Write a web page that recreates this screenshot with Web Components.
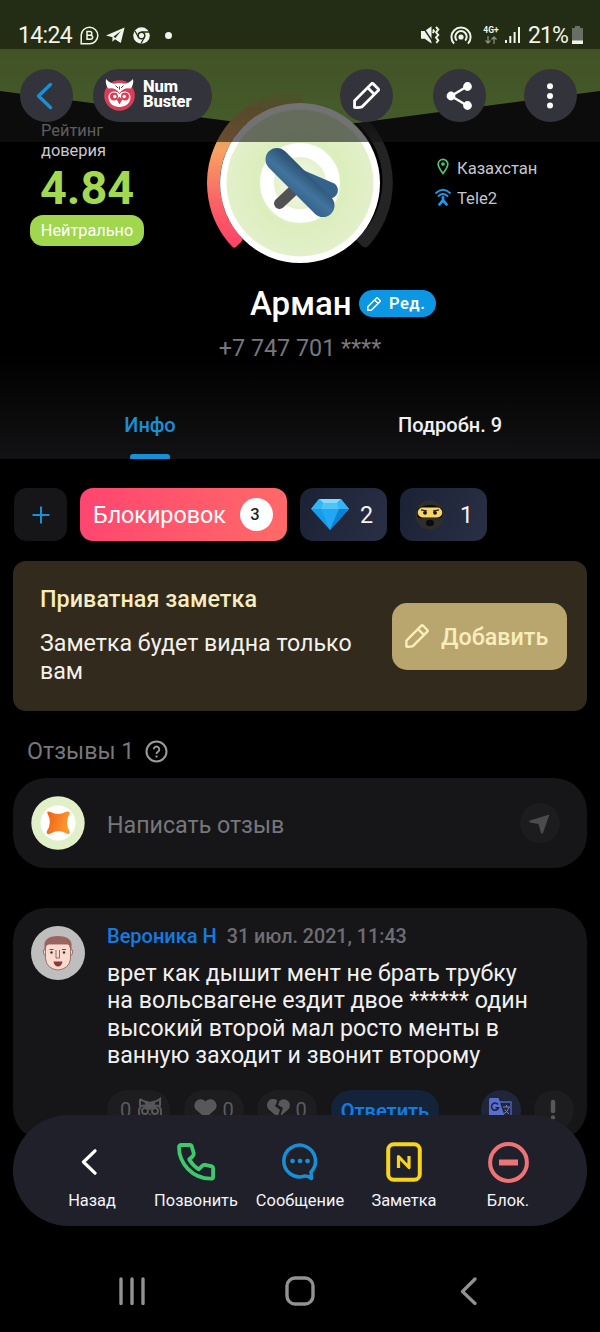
<!DOCTYPE html>
<html lang="ru">
<head>
<meta charset="utf-8">
<title>NumBuster</title>
<style>
html,body{margin:0;padding:0;background:#000}
body{width:600px;height:1332px;overflow:hidden;font-family:Roboto,"Noto Sans",sans-serif;color:#f4f4f4}
</style>
</head>
<body>
<phone-screen></phone-screen>
<script>
const define = (name, css, html) => {
  const t = document.createElement('template');
  t.innerHTML = `<style>*{box-sizing:border-box}svg{display:block;flex:none}:host{display:block;box-sizing:border-box}${css}</style>${html}`;
  customElements.define(name, class extends HTMLElement {
    constructor() { super(); this.attachShadow({mode:'open'}).append(t.content.cloneNode(true)); }
  });
};

const pencil = (size, sw) => `<svg width="${size}" height="${size}" viewBox="0 0 26 26" fill="none" stroke="currentColor" stroke-width="${sw}" stroke-linejoin="round"><path d="M1.5 24.5V18L17.7 1.8a1.3 1.3 0 0 1 1.8 0l4.7 4.7a1.3 1.3 0 0 1 0 1.8L8.5 24Q5 25 1.5 24.5ZM14.2 5.5l6.5 6.5"/></svg>`;

define('status-bar', `
:host{height:49px;background:rgba(0,0,0,.45);color:#f1f4ea}
.row{display:flex;align-items:center;height:49px;padding:21px 17px 0 18px;font-size:23px}
.time{width:55px;letter-spacing:-.65px}
.dot{width:7px;height:7px;border-radius:50%;background:currentColor;margin-left:15px}
.net{font-size:8.5px;font-weight:700;line-height:9px;width:18px;text-align:center;margin-left:10px}
.pct{letter-spacing:-.9px;margin-left:8px}
`, `<div class="row">
<span class="time">14:24</span>
<svg style="margin-left:7px" width="19" height="19" viewBox="0 0 19 19" fill="none" stroke="currentColor" stroke-width="1.5"><path d="M1.2 17.8V9.3a8.3 8.3 0 1 1 8.3 8.5Z"/><path d="M7 5.6h3a1.8 1.8 0 0 1 0 3.6H7Zm0 3.6h3.6a2 2 0 0 1 0 4H7Z"/></svg>
<svg style="margin-left:7px" width="19" height="17" viewBox="0 0 19 17" fill="currentColor"><path d="M18.6.5 14.8 16 9 12.2l-2.6 2.5.1-4.4L0 8.4Z"/><path d="m7.4 9.7 7.5-5.8-5.5 7.2Z" fill="#252e18"/></svg>
<svg style="margin-left:8px" width="17" height="17" viewBox="0 0 17 17"><circle cx="8.5" cy="8.5" r="8.3" fill="currentColor"/><circle cx="8.5" cy="8.5" r="3.3" fill="none" stroke="#252e18" stroke-width="1.500"/><path d="M8.5 5H16M5.5 10.3 2 4M11.4 10.3 8 16.5" stroke="#252e18" stroke-width="1.3"/></svg>
<i class="dot"></i>
<span style="flex:1"></span>
<svg width="19" height="18" viewBox="0 0 19 18" fill="currentColor"><path d="M0 5h3.7L10.5.3V17.5L3.7 12.8H0Z"/><path d="m1.5.6 11.5 17" stroke="#252e18" stroke-width="1.600"/><path d="m15 1 2.3 2.6L15 6.3 17.3 9 15 11.6l2.3 2.7-2 2.6M12 3.5l1 1.6-1.3 2" fill="none" stroke="currentColor" stroke-width="1.9"/></svg>
<svg style="margin-left:10px" width="22" height="19" viewBox="0 0 22 19" fill="none" stroke="currentColor" stroke-width="2"><path d="M4 17.6a9.6 9.6 0 1 1 14 0M6.8 14.6a5.7 5.7 0 1 1 8.4 0"/><circle cx="11" cy="11" r="1.6" fill="currentColor"/></svg>
<span class="net">4G+<svg width="12" height="8" viewBox="0 0 12 8" style="margin:1px auto 0" fill="none" stroke="#87907a" stroke-width="1.3"><path d="M3 0v7M.5 4.5 3 7l2.5-2.5M9 8V1M6.500 3.500 9 1l2.500 2.500"/></svg></span>
<svg style="margin-left:5px" width="15" height="16" viewBox="0 0 15 16" fill="currentColor"><path d="M0 13h2v3H0ZM4.300 9h2v7h-2ZM8.600 5h2v11h-2ZM13 0h2v16h-2Z"/></svg>
<span class="pct">21%</span>
<svg style="margin-left:4px" width="11" height="18" viewBox="0 0 11 18"><path d="M3 0h5v2h3v16H0V2h3Z" fill="#697063"/><path d="M0 14.500h11V18H0Z" fill="#f1f4ea"/></svg>
</div>`);

define('round-button', `:host{width:53px;height:53px;border-radius:50%;background:#33333b;color:#fff;display:grid;place-items:center}`, `<slot></slot>`);

define('brand-pill', `
:host{width:119px;height:53px;border-radius:27px;background:#33333b;color:#fff}
.r{display:flex;align-items:center;height:53px;padding:0 0 1px 11px;gap:8px}
b{display:block;font-size:16.500px;line-height:14.800px;font-weight:800;letter-spacing:-.1px}
`, `<div class="r"><svg width="31" height="32" viewBox="0 0 31 32">
<circle cx="15.500" cy="16.500" r="15.300" fill="#d83e55"/>
<path d="M2 0q4 4.500 9 4.800Q15.500 3 20 4.800 25 4.500 29 0q1 6-2.500 9.500Q20 8 15.500 14 11 8 4.500 9.500 1 6 2 0Z" fill="#fff"/>
<path d="M11.500 6.500 14 9m5.500-2.500L17 9m-1.500-1.500v3" stroke="#7a3340" stroke-width="1"/>
<path d="M15.500 15c-4-4.500-11-2.500-11 3 0 6.500 5 10 11 10s11-3.500 11-10c0-5.500-7-7.500-11-3Z" fill="#fff"/>
<circle cx="10" cy="17.500" r="4" fill="#d83e55"/><circle cx="21" cy="17.500" r="4" fill="#d83e55"/><circle cx="10.800" cy="17.500" r="1.700" fill="#fff"/><circle cx="20.200" cy="17.500" r="1.700" fill="#fff"/>
<path d="m15.500 17.500 2.800 3-2.800 5-2.800-5Z" fill="#d83e55"/></svg><div><b>Num</b><b>Buster</b></div></div>`);

define('top-bar', `
:host{position:absolute;inset:0 0 auto 0;height:142px;background:rgba(20,20,20,.6)}
nav{display:flex;align-items:center;padding:20px 23px 0 20px}
`, `<status-bar></status-bar><nav>
<round-button><svg width="18" height="28" viewBox="0 0 18 28" style="margin-right:6px" fill="none" stroke="#1591da" stroke-width="3.400" stroke-linecap="round" stroke-linejoin="round"><path d="M15.500 2.500 3.500 14l12 11.500"/></svg></round-button>
<brand-pill style="margin-left:20px"></brand-pill>
<round-button style="margin-left:128px">${pencil(27,2.7)}</round-button>
<round-button style="margin-left:40px"><svg width="27" height="28" viewBox="0 0 27 28" fill="#fff" stroke="#fff" stroke-width="2.400"><path d="M5 14 21 4.500M5 14l16 9.500" fill="none"/><circle cx="5" cy="14" r="3.200"/><circle cx="21.500" cy="4.500" r="3.200"/><circle cx="21.500" cy="23.500" r="3.200"/></svg></round-button>
<round-button style="margin-left:38px"><svg width="8" height="28" viewBox="0 0 8 28" fill="#fff" style="margin-right:1px"><circle cx="4" cy="4.300" r="3"/><circle cx="4" cy="14" r="3"/><circle cx="4" cy="23.500" r="3"/></svg></round-button>
</nav>`);

define('trust-rating', `
:host{padding:121px 0 0 30px}
p{margin:0 0 0 11px;font-size:16.400px;line-height:19.500px;color:#c9c9cf}
strong{display:block;margin:2px 0 0 10px;font-size:46.800px;line-height:52px;font-weight:700;color:#a2d951}
span{display:flex;align-items:center;justify-content:center;width:114px;height:31px;border-radius:13px;margin-top:1px;background:#a1d64f;color:#fff;font-size:16.300px}
`, `<p>Рейтинг<br>доверия</p><strong>4.84</strong><span>Нейтрально</span>`);

define('score-avatar', `:host{width:200px;height:200px;margin:83px 0 0 0}`, `
<svg width="200" height="200" viewBox="200 83 200 200">
<defs><linearGradient id="g" x1="0" x2="0" y1="90" y2="250" gradientUnits="userSpaceOnUse"><stop offset="0" stop-color="#8fc04a"/><stop offset=".12" stop-color="#b99a4c"/><stop offset=".38" stop-color="#f7a263"/><stop offset=".7" stop-color="#fb6266"/><stop offset="1" stop-color="#ff4066"/></linearGradient>
<linearGradient id="k" x1="0" x2="0" y1="90" y2="142" gradientUnits="userSpaceOnUse"><stop offset="0" stop-color="#fff" stop-opacity="0"/><stop offset="1" stop-color="#fff" stop-opacity=".14"/></linearGradient>
<radialGradient id="a" cx="300" cy="183" r="74" gradientUnits="userSpaceOnUse"><stop offset="0" stop-color="#f6faee"/><stop offset=".36" stop-color="#e4f1cc"/><stop offset=".6" stop-color="#dceebd"/><stop offset="1" stop-color="#e3f0cb"/></radialGradient>
<linearGradient id="b" x1="306" y1="172" x2="291" y2="190" gradientUnits="userSpaceOnUse"><stop offset="0" stop-color="#2f5476"/><stop offset=".6" stop-color="#41749d"/><stop offset="1" stop-color="#3a678f"/></linearGradient></defs>
<path d="M300 92.500A90.500 90.500 0 0 0 234.200 245.100L239.900 239.600A82.500 82.500 0 0 1 300 100.500Z" fill="url(#g)" stroke="url(#g)" stroke-width="5" stroke-linejoin="round"/>
<path d="M302.500 90A93 93 0 0 1 367.700 246.500Q365 248.500 362 246L356 240A79 79 0 0 0 302.500 102Z" fill="url(#k)"/>
<circle cx="300" cy="183" r="80" fill="#fff"/><circle cx="300" cy="183" r="73.500" fill="url(#a)"/>
<circle cx="300" cy="183" r="33" fill="none" stroke="#fff" stroke-width="14"/>
<path d="m279.500 203.500 17-16" stroke="#545152" stroke-width="11" stroke-linecap="round"/>
<path d="m303 170 29 12.500a8 8 0 0 1-4 15.500l-18-6Z" fill="#34628a"/>
<path d="m277 159.500 46 46" stroke="url(#b)" stroke-width="23" stroke-linecap="round"/>
</svg>`);

define('caller-origin', `
:host{padding:158px 0 0 35px;font-size:16.600px;color:#c6c6ce}
div{display:flex;align-items:center;height:20px;margin-bottom:10px}
div svg{width:16px;margin-right:6px}
`, `<div><svg height="17" viewBox="0 0 16 17" style="margin-top:-3px" fill="none" stroke="#4dc774" stroke-width="1.700"><path d="M8 15.500C5 11.500 3.200 9 3.200 6.200a4.800 4.800 0 0 1 9.600 0C12.800 9 11 11.500 8 15.500Z"/><circle cx="8" cy="6" r="1"/></svg>Казахстан</div>
<div><svg height="18" viewBox="0 0 16 18" style="margin-top:-3px" fill="none" stroke="#2196e8" stroke-width="1.800" stroke-linecap="round"><path d="M1 5q7-6.500 14 0M3.500 8Q8 4 12.500 8"/><path d="M8 9.500v2.500L4.500 16.500M8 12l3.500 4.500" stroke-width="2.800"/></svg>Tele2</div>`);

define('profile-hero', `
:host{position:relative;height:391px}
.sky{position:absolute;inset:0 0 auto 0}
.cols{position:relative;display:grid;grid-template-columns:200px 200px 200px;height:283px}
.name{display:flex;align-items:center;padding-left:250px;height:41px;gap:8px;position:relative}
h1{margin:0;font-size:33px;font-weight:500;color:#fff;width:101px}
.edit{display:flex;align-items:center;width:77px;height:27px;border-radius:14px;background:#0b97e4;color:#fff;font-size:16.500px;font-weight:600;padding-left:8px;gap:8px;letter-spacing:.5px}
.phone{text-align:center;color:#77777d;font-size:23.300px;line-height:28px;margin-top:9.500px}
`, `<svg class="sky" width="600" height="142" viewBox="0 0 600 142"><defs><linearGradient id="s" x1="0" x2="0" y1="0" y2="1"><stop offset="0" stop-color="#85ab42"/><stop offset=".4" stop-color="#88b042"/><stop offset="1" stop-color="#8fc74a"/></linearGradient></defs><path d="M0 0h600v91L356 123q-56 7-112 0L0 91Z" fill="url(#s)"/></svg>
<div class="cols"><trust-rating></trust-rating><score-avatar></score-avatar><caller-origin></caller-origin></div>
<div class="name"><h1>Арман</h1><span class="edit">${pencil(14,2.8)}Ред.</span></div>
<div class="phone">+7 747 701 ****</div>`);

define('profile-tabs', `
:host{display:grid;grid-template-columns:300px 300px;height:68px;font-size:20px;font-weight:500;text-align:center}
div{position:relative;height:68px;line-height:69px;color:#f0f0f0}
.on{color:#1790d6}
.on::after{content:"";position:absolute;left:130px;bottom:0;width:40px;height:5px;border-radius:3px 3px 1px 1px;background:#1591d8}
`, `<div class="on">Инфо</div><div>Подробн. 9</div>`);

define('tag-row', `
:host{display:flex;gap:13px;padding:29px 14px 0;font-size:23.300px}
div{height:53px;border-radius:13px;display:flex;align-items:center}
.add{width:53px;background:#161618;justify-content:center}
.block{width:207px;background:linear-gradient(100deg,#ff4570,#ff6a68);padding-left:13px;color:#fff;letter-spacing:-.03px}
.block b{width:33px;height:33px;border-radius:50%;background:#fff;color:#222;font-size:16.500px;font-weight:500;display:grid;place-items:center;margin-left:auto;margin-right:14px;padding-right:3px}
.t{width:87px;background:linear-gradient(110deg,#1b2236,#293045);padding-left:11px}
.t span{margin-left:auto;margin-right:14px}
`, `<div class="add"><svg width="18" height="20" viewBox="0 0 18 20" stroke="#1692da" stroke-width="2"><path d="M9 1.500v17M.5 10h17"/></svg></div>
<div class="block">Блокировок<b>3</b></div>
<div class="t"><svg width="38" height="33" viewBox="0 0 38 33"><path d="M8 1h22l8 10-19 21L0 11Z" fill="#169ce9"/><path d="M8 1h22l-4 4H12Z" fill="#86d9fb"/><path d="m12 5-4-4-8 10h10ZM26 5l4-4 8 10H28Z" fill="#34b6f4"/><path d="M12 5h14l2 6H10Z" fill="#4fc4f8"/><path d="M10 11h18l-9 21Z" fill="#21a8f4"/><path d="M28 11h10L19 32Z" fill="#0b82d5"/></svg><span>2</span></div>
<div class="t" style="padding-left:15px"><svg width="30" height="30" viewBox="0 0 30 30"><circle cx="15" cy="15" r="14.500" fill="#2e2e2c"/><path d="M2.500 9Q15 1 27.500 9v8q-3 2-5.500 1H8q-3 1-5.500-1Z" fill="#0c0c0c"/><rect x="2.800" y="7.500" width="24.400" height="10" rx="4.800" fill="#f6d66b"/><path d="M6 9.800 12 11M24 9.800 18 11" stroke="#221c0c" stroke-width="1.200"/><circle cx="10" cy="12.800" r="1.900" fill="#17130a"/><circle cx="20" cy="12.800" r="1.900" fill="#17130a"/><ellipse cx="15" cy="23" rx="4" ry="3.200" fill="#0c0c0c"/></svg><span>1</span></div>`);

define('note-card', `
:host{display:flex;align-items:center;margin:20px 13px 0;height:150px;border-radius:13px;background:#322a1c;padding:0 20px 0 27px}
.c{flex:1;margin-top:-2px}
h2{margin:0 0 17px;font-size:23.300px;line-height:28px;font-weight:500;color:#f7ecbf;letter-spacing:.06px}
p{margin:0;font-size:23.200px;line-height:27.300px;color:#f3f1ec;width:330px}
.b{display:flex;align-items:center;width:175px;height:67px;border-radius:15px;background:#b9a66f;color:#f9eebb;font-size:23.300px;font-weight:500;padding:2px 0 0 13px;gap:12px}
.b svg{margin-top:-3px}
`, `<div class="c"><h2>Приватная заметка</h2><p>Заметка будет видна только вам</p></div><div class="b">${pencil(24,2.6)}Добавить</div>`);

define('reviews-heading', `:host{display:flex;align-items:center;gap:11px;margin:26px 27px 0;height:28px;font-size:23.300px;color:#77777d}`,
`Отзывы 1 <svg width="23" height="23" viewBox="0 0 23 23" fill="none" stroke="#9b9b9b" stroke-width="2"><circle cx="11.500" cy="11.500" r="10"/><path d="M8.700 9.300a2.800 2.800 0 1 1 4.600 2.200c-1.200.9-1.800 1.300-1.800 2.500" stroke-width="1.900"/><path d="M11.500 15.500v2"/></svg>`);

define('review-input', `
:host{display:flex;align-items:center;margin:13px 13px 0;height:90px;border-radius:33px;background:#161618;padding:0 27px 0 18px;font-size:23.200px;color:#77777b}
span{margin:3px auto 0 22px}
.send{width:40px;height:40px;border-radius:50%;background:#1c1c1e;display:grid;place-items:center}
`, `<svg width="54" height="54" viewBox="0 0 54 54"><defs><linearGradient id="o" x2="1" y2=".3"><stop offset="0" stop-color="#ef5f14"/><stop offset="1" stop-color="#fb982f"/></linearGradient></defs><circle cx="27" cy="27" r="26.700" fill="#e1f0c8"/><circle cx="27" cy="27" r="17.500" fill="#fff"/><path d="M16.500 17.500c-.8-2.500.8-2.500 3-1.500q7.500 4 15 0c2.500-1 5-.5 4 2q-5 9 0 17c1 2.500-.5 4-3 2.500q-8-5-16 0c-2.500 1.500-4.500.5-3.500-2.500q5.500-8.500.5-17.500Z" fill="url(#o)"/></svg>
<span>Написать отзыв</span>
<div class="send"><svg width="21" height="20" viewBox="0 0 21 20" fill="#4b4b4d" style="margin:2px 2px 0 0"><path d="M20.500.500 14 19q-1 1-2 0L9.500 10 1 8.500Q-.500 7.500 1 6.500Z"/></svg></div>`);

define('review-card', `
:host{display:flex;margin:40px 13px 0;height:233px;border-radius:33px;background:#161618;padding:18px 14px 0 18px}
.c{flex:1;margin-left:22px}
.h{font-size:19.700px;line-height:24px;font-weight:500;margin-top:-2px;color:#6e6e72}
.h b{color:#147ce0;font-weight:500;margin-right:10px;font-size:20px}
p{margin:11px 0 0;font-size:23.200px;line-height:27.400px;color:#f1f1f1;white-space:nowrap}
.r{display:flex;margin-top:20px;font-size:20px;color:#5b5b5e}
.r div{height:40px;border-radius:20px;background:#1d1d20;display:flex;align-items:center;justify-content:center;gap:5px}
.r .reply{width:108px;background:#12233a;color:#147ce0;font-weight:600;margin-left:14px;padding-top:2px}
`, `<svg width="54" height="54" viewBox="0 0 54 54"><circle cx="27" cy="27" r="27" fill="#bebebe"/>
<path d="M14 23q-2.500 0-1.500 4 .5 3 3 3M40 23q2.500 0 1.500 4-.5 3-3 3" fill="#f7d4c7" stroke="#8d5a50" stroke-width=".8"/><path d="M14.500 18v15q1.500 10 12.500 11 11-1 12.500-11V18Z" fill="#f9dace" stroke="#8d5a50" stroke-width=".8"/><path d="M13.500 25v-8q2-7 13-7 13 0 14 8v7l-2-4q0-2-2-3H18q-3 1-3 4Z" fill="#9a655e"/><path d="M18.500 23.500h4M31 23.500h4" stroke="#73483f" stroke-width="1"/><circle cx="20.500" cy="26.500" r="1.200" fill="#333"/><circle cx="33" cy="26.500" r="1.200" fill="#333"/><path d="M25 24v8h3.500v-8" fill="none" stroke="#8d5a50" stroke-width=".9"/><path d="M22.500 35.500h9q-1 5-4.500 5T22.500 35.500Z" fill="#8d3835"/></svg>
<div class="c"><div class="h"><b>Вероника Н</b>31 июл. 2021, 11:43</div>
<p>врет как дышит мент не брать трубку<br>на вольсвагене ездит двое ****** один<br>высокий второй мал росто менты в<br>ванную заходит и звонит второму</p>
<div class="r"><div style="width:63px;padding-left:5px;gap:7px">0<svg width="24" height="25" viewBox="0 0 24 25" fill="none" stroke="#58585b" stroke-width="2"><path d="M2 2q4 3 7 3l3 1 3-1q3 0 7-3v7M2 2v7M2 20c-2-4-1-9 1-11 4-1 7 0 9 3 2-3 5-4 9-3 2 2 3 7 1 11-3 5-17 5-20 0Z"/><path d="m6 4 6 3 6-3-2 5-4 3-4-3Z" fill="#58585b" stroke="none"/><circle cx="7" cy="14" r="3"/><circle cx="17" cy="14" r="3"/><path d="m12 16 2 3-2 3-2-3Z" fill="#58585b" stroke="none"/></svg></div>
<div style="width:60px;margin-left:14px"><svg width="23" height="19" viewBox="0 0 23 19" fill="#58585b" style="margin-top:-2px"><path d="M11.500 19 1.800 10.500A6 6 0 0 1 11.500 2.500a6 6 0 0 1 9.700 8Z"/></svg>0</div>
<div style="width:60px;margin-left:13px"><svg width="23" height="19" viewBox="0 0 23 19" fill="#58585b" style="margin-top:-2px"><path d="m10.500 18-8.700-7.500A6 6 0 0 1 10.500 1.700L8 7l5 4ZM13 17.500 16 9l-5-3 1.500-4a6 6 0 0 1 8.700 8.500Z"/></svg>0</div>
<div class="reply">Ответить</div>
<div style="width:40px;margin-left:42px;background:#20253a"><svg width="23" height="23" viewBox="0 0 23 23" style="margin:-1px 2px 0 0"><path d="M9 4h13v17h-9" fill="none" stroke="#5266c0" stroke-width="1.300"/><path d="M1.500 0h8l6 18H1.500Q0 18 0 16.500v-15Q0 0 1.500 0Z" fill="#596fd0"/><path d="M9 6.500a3.600 3.600 0 1 0 .5 3.300H6.500" fill="none" stroke="#1d2338" stroke-width="1.600"/><path d="M14 9h7m-3.500-2v2m2.500 0q-1 5-5.500 7m1-4.500 4.500 4.500" fill="none" stroke="#7483c9" stroke-width="1"/></svg></div>
<div style="width:40px;margin-left:13px"><svg width="6" height="22" viewBox="0 0 6 22" stroke="#58585b" stroke-width="4.500" stroke-linecap="round" style="margin-right:2px"><path d="M3 3v9M3 18.500v.1"/></svg></div></div></div>`);

define('action-item', `:host{width:104px;display:flex;flex-direction:column;align-items:center;font-size:16.400px;line-height:20px;color:#f4f4f6}
div{height:42px;display:grid;place-items:center;margin-bottom:8px}`, `<div><slot name="icon"></slot></div><slot></slot>`);

define('action-bar', `
:host{position:absolute;left:13px;right:13px;top:1115px;height:111px;border-radius:55.500px;background:#20202b;display:flex;padding:26px 27px 0}
`, `
<action-item><svg slot="icon" width="16" height="26" viewBox="0 0 16 26" style="margin-right:6px" fill="none" stroke="#fff" stroke-width="3.200" stroke-linecap="round" stroke-linejoin="round"><path d="M14 1.800 2.500 13 14 24.200"/></svg>Назад</action-item>
<action-item><svg slot="icon" width="38" height="38" viewBox="0 0 38 38" fill="none" stroke="#3dca6d" stroke-width="3.800" stroke-linejoin="round"><path d="M4.300 2h8.400q1.700 0 2.200 1.700l1.800 6.600q.4 1.500-.8 2.700l-3.700 3.500q3.800 6.300 9.500 9.800l3.800-3.600q1.100-1.100 2.600-.8l6 1.200q2 .4 2 2.300v8.300q0 2-2.200 2C15 35.500 2 20 2 4.300Q2 2 4.300 2Z"/></svg>Позвонить</action-item>
<action-item><svg slot="icon" width="36" height="38" viewBox="0 0 36 38" fill="none" stroke="#1790d8" stroke-width="3.500" stroke-linecap="round" stroke-linejoin="round"><path d="M29.500 35.500 29 29a15.800 15.800 0 1 0-7 4.200q3.800-.6 7.500 2.300Z"/><path d="M10.500 18h.1M18 18h.1M25.500 18h.1" stroke-width="4.600"/></svg>Сообщение</action-item>
<action-item><svg slot="icon" width="36" height="40" viewBox="0 0 36 40" fill="none" stroke="#f6d51c" stroke-width="4" stroke-linejoin="round"><rect x="2.200" y="2.200" width="31.600" height="35.600" rx="5.500"/><path d="M12.500 26V14.500L23 25.500V14" stroke-width="3.200"/></svg>Заметка</action-item>
<action-item><svg slot="icon" width="41" height="41" viewBox="0 0 41 41" fill="none" stroke="#ed7377"><circle cx="20.500" cy="20.500" r="18.400" stroke-width="4"/><path d="M11 20.500h19" stroke-width="6" stroke-linejoin="round"/></svg>Блок.</action-item>`);

define('system-nav', `
:host{position:absolute;inset:auto 0 0 0;height:82px;display:grid;grid-template-columns:264px 72px 264px;justify-items:center;align-items:center}
`, `
<svg width="28" height="28" viewBox="0 0 28 28" stroke="#929292" stroke-width="3.400" stroke-linecap="round"><path d="M3 2v24.500M14 2v24.500M25 2v24.500"/></svg>
<svg width="30" height="30" viewBox="0 0 30 30" fill="none" stroke="#929292" stroke-width="3.400"><rect x="2" y="2" width="26" height="26" rx="8"/></svg>
<svg width="17" height="28" viewBox="0 0 17 28" fill="none" stroke="#929292" stroke-width="3.200" stroke-linecap="round" stroke-linejoin="round"><path d="M15 2 2.500 14.500 15 26.500"/></svg>`);

define('phone-screen', `
:host{position:relative;width:600px;height:1332px;overflow:hidden;background:#000}
.head{background:linear-gradient(#000 355px,#121214 459px)}
`, `<div class="head"><profile-hero></profile-hero><profile-tabs></profile-tabs></div>
<tag-row></tag-row><note-card></note-card><reviews-heading></reviews-heading><review-input></review-input><review-card></review-card>
<top-bar></top-bar><action-bar></action-bar><system-nav></system-nav>`);
</script>
</body>
</html>
